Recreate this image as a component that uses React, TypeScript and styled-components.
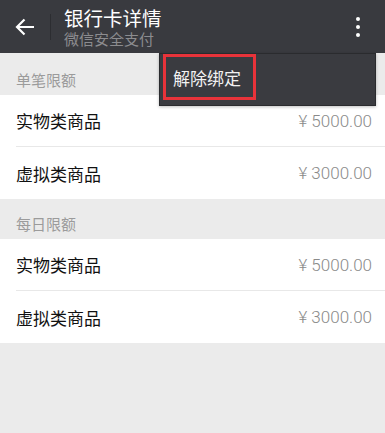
import React from "react";
import styled, { createGlobalStyle } from "styled-components";

const Global = createGlobalStyle`
  html, body { margin: 0; padding: 0; }
  body {
    background: #ebebeb;
    font-family: "Noto Sans CJK SC", "Noto Sans", sans-serif;
    width: 385px;
    height: 433px;
    overflow: hidden;
  }
`;

const Page = styled.div`
  position: relative;
  width: 385px;
  height: 433px;
  background: #ebebeb;
`;

const Header = styled.header`
  display: flex;
  align-items: center;
  height: 53px;
  background: #393a3f;
`;

const BackButton = styled.div`
  width: 50px;
  height: 53px;
  display: flex;
  align-items: center;
  justify-content: center;
`;

const Divider = styled.div`
  width: 1px;
  height: 26px;
  background: #2c2d31;
`;

const TitleBlock = styled.div`
  display: flex;
  flex-direction: column;
  align-self: flex-start;
  padding-top: 8px;
  margin-left: 13px;
  flex: 1;
  font-family: "Liberation Sans", "Noto Sans CJK SC", sans-serif;
`;

const Title = styled.div`
  color: #ffffff;
  font-size: 19.5px;
  line-height: 22px;
`;

const SubTitle = styled.div`
  color: #8c8c8f;
  font-size: 15px;
  line-height: 16px;
  margin-top: 2px;
`;

const MoreButton = styled.div`
  width: 50px;
  height: 53px;
  display: flex;
  flex-direction: column;
  align-items: center;
  justify-content: center;
  gap: 4px;
  margin-right: 2px;
`;

const Dot = styled.span`
  width: 4px;
  height: 4px;
  border-radius: 50%;
  background: #ffffff;
`;

const SectionLabel = styled.div<{ $h: number }>`
  height: ${(p) => p.$h}px;
  box-sizing: border-box;
  padding: 0 16px 6px;
  display: flex;
  align-items: flex-end;
  color: #9b9b9b;
  font-size: 15px;
  line-height: 18px;
`;

const Group = styled.div`
  background: #ffffff;
  padding-left: 16px;
`;

const Row = styled.div<{ $last?: boolean }>`
  height: 52px;
  box-sizing: border-box;
  display: flex;
  align-items: center;
  justify-content: space-between;
  padding-right: 13px;
  border-bottom: ${(p) => (p.$last ? "none" : "1px solid #e8e8e8")};
`;

const RowLabel = styled.span`
  color: #111111;
  font-size: 17px;
`;

const Amount = styled.span`
  color: #8a8a8a;
  font-size: 17px;
  font-family: Roboto, "Noto Sans CJK SC", sans-serif;
  font-weight: 300;
  white-space: pre;
`;

const Menu = styled.div`
  position: absolute;
  top: 53px;
  left: 159px;
  width: 217px;
  height: 53px;
  box-sizing: border-box;
  background: #3a3b40;
  border: 1px solid #2a2b2e;
  box-shadow: 0 1px 3px rgba(0, 0, 0, 0.25);
`;

const MenuItem = styled.div`
  position: absolute;
  left: 3px;
  top: 0px;
  width: 93px;
  height: 46px;
  box-sizing: border-box;
  border: 3px solid #e8333a;
  display: flex;
  align-items: center;
  padding-left: 7px;
  color: #f2f2f2;
  font-size: 17px;
`;

const rows1 = [
  { label: "实物类商品", amount: "¥ 5000.00" },
  { label: "虚拟类商品", amount: "¥ 3000.00" },
];

export default function App() {
  return (
    <Page>
      <Global />
      <Header>
        <BackButton>
          <svg width="20" height="18" viewBox="0 0 20 18" fill="none">
            <path d="M19 9H2.5M9.5 1.5L2 9l7.5 7.5" stroke="#fff" strokeWidth="2.2" />
          </svg>
        </BackButton>
        <Divider />
        <TitleBlock>
          <Title>银行卡详情</Title>
          <SubTitle>微信安全支付</SubTitle>
        </TitleBlock>
        <MoreButton>
          <Dot />
          <Dot />
          <Dot />
        </MoreButton>
      </Header>
      <SectionLabel $h={42}>单笔限额</SectionLabel>
      <Group>
        {rows1.map((r, i) => (
          <Row key={r.label} $last={i === rows1.length - 1}>
            <RowLabel>{r.label}</RowLabel>
            <Amount>{r.amount}</Amount>
          </Row>
        ))}
      </Group>
      <SectionLabel $h={40}>每日限额</SectionLabel>
      <Group>
        {rows1.map((r, i) => (
          <Row key={r.label} $last={i === rows1.length - 1}>
            <RowLabel>{r.label}</RowLabel>
            <Amount>{r.amount}</Amount>
          </Row>
        ))}
      </Group>
      <Menu>
        <MenuItem>解除绑定</MenuItem>
      </Menu>
    </Page>
  );
}
